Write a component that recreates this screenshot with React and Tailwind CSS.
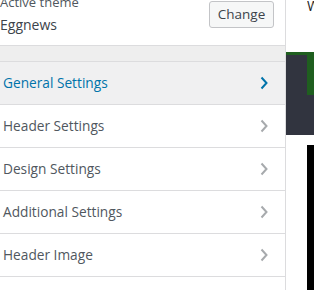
export default function App() {
  const sections = [
    { label: 'General Settings', active: true },
    { label: 'Header Settings' },
    { label: 'Design Settings' },
    { label: 'Additional Settings' },
    { label: 'Header Image' },
  ]

  return (
    <div className="w-[314px] h-[290px] flex bg-white overflow-hidden font-['Open_Sans',sans-serif]">
      {/* Customizer sidebar */}
      <div className="w-[286px] shrink-0 border-r border-[#dcdcde] bg-white">
        {/* Active theme */}
        <div className="h-[46px] flex items-start justify-between border-b border-[#dcdcde] overflow-hidden">
          <div className="-mt-[7px]">
            <div className="text-[13px] leading-[18px] text-[#50575e]">Active theme</div>
            <div className="text-[14px] leading-[20px] mt-[4px] text-[#3c434a]">Eggnews</div>
          </div>
          <button className="mt-px mr-[11px] w-[65px] h-[27px] rounded-[3px] border border-[#c3c4c7] bg-[#f6f7f7] text-[13.5px] text-[#3c434a]">
            Change
          </button>
        </div>

        {/* Spacer band */}
        <div className="h-[16px] bg-[#eeeeee] border-b border-[#dcdcde]" />

        {sections.map(s => (
          <div
            key={s.label}
            className={`h-[43px] flex items-center justify-between border-b border-[#dcdcde] pl-[3px] pr-[17px] ${s.active ? 'bg-[#f0f0f1]' : 'bg-white'}`}
          >
            <span className={`text-[13.7px] ${s.active ? 'text-[#0073aa]' : 'text-[#50575e]'}`}>{s.label}</span>
            <svg width="8" height="14" viewBox="0 0 8 14" fill="none">
              <path
                d="M1.5 1.5 L6.5 7 L1.5 12.5"
                stroke={s.active ? '#0073aa' : '#a7aaad'}
                strokeWidth="2"
              />
            </svg>
          </div>
        ))}
      </div>

      {/* Preview pane */}
      <div className="w-[28px] shrink-0 flex flex-col">
        <div className="h-[52px] shrink-0 flex justify-end">
          <span className="w-[7px] overflow-hidden text-[14px] leading-[12px] text-[#1d2327]">W</span>
        </div>
        <div className="h-[83px] shrink-0 bg-[#31343f] border-t-[3px] border-[#1f5f1f] flex justify-end">
          <div className="w-[7px] h-[40px] shrink-0 bg-[#1f5f1f]" />
        </div>
        <div className="h-[10px] shrink-0" />
        <div className="flex-1 flex justify-end">
          <div className="w-[7px] shrink-0 bg-black" />
        </div>
      </div>
    </div>
  )
}
